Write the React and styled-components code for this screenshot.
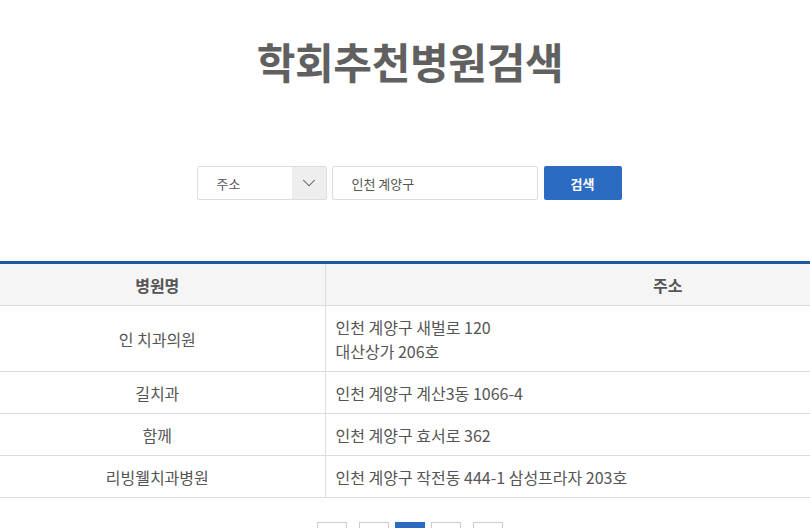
import styled, { createGlobalStyle } from "styled-components";
import { ChevronDown } from "lucide-react";

const GlobalStyle = createGlobalStyle`
  html, body {
    margin: 0;
    padding: 0;
    background: #fff;
    overflow: hidden;
  }
  body {
    font-family: "Noto Sans CJK KR", "Noto Sans", sans-serif;
    color: #555;
  }
`;

const hospitals = [
  { name: "인 치과의원", address: ["인천 계양구 새벌로 120", "대산상가 206호"] },
  { name: "길치과", address: ["인천 계양구 계산3동 1066-4"] },
  { name: "함께", address: ["인천 계양구 효서로 362"] },
  { name: "리빙웰치과병원", address: ["인천 계양구 작전동 444-1 삼성프라자 203호"] },
];

const App = () => {
  return (
    <>
      <GlobalStyle />
      <Page>
        <Title>학회추천병원검색</Title>
        <SearchBar>
          <SelectBox>
            <SelectLabel>주소</SelectLabel>
            <SelectArrow>
              <ChevronDown size={22} strokeWidth={1.1} />
            </SelectArrow>
          </SelectBox>
          <SearchInput defaultValue="인천 계양구" />
          <SearchButton>검색</SearchButton>
        </SearchBar>
        <TableWrap>
          <Table>
            <colgroup>
              <col style={{ width: "335px" }} />
              <col />
            </colgroup>
            <thead>
              <tr>
                <Th>병원명</Th>
                <Th>주소</Th>
              </tr>
            </thead>
            <tbody>
              {hospitals.map((h) => (
                <tr key={h.name}>
                  <NameCell>{h.name}</NameCell>
                  <AddressCell>
                    {h.address.map((line) => (
                      <div key={line}>{line}</div>
                    ))}
                  </AddressCell>
                </tr>
              ))}
            </tbody>
          </Table>
        </TableWrap>
        <Pagination>
          <PageButton>«</PageButton>
          <PageGroup>
            <PageButton>‹</PageButton>
            <PageButton $active>1</PageButton>
            <PageButton>›</PageButton>
          </PageGroup>
          <PageButton>»</PageButton>
        </Pagination>
      </Page>
    </>
  );
};

export default App;

const Page = styled.div`
  width: 820px;
  padding-top: 36px;
`;

const Title = styled.h1`
  margin: 0;
  text-align: center;
  font-size: 42px;
  line-height: 50px;
  font-weight: 700;
  color: #606060;
  letter-spacing: -0.3px;
`;

const SearchBar = styled.div`
  display: flex;
  justify-content: center;
  align-items: stretch;
  margin-top: 80px;
  height: 34px;
  padding-right: 2px;
`;

const SelectBox = styled.div`
  display: flex;
  width: 130px;
  box-sizing: border-box;
  border: 1px solid #ddd;
  border-radius: 2px;
  overflow: hidden;
`;

const SelectLabel = styled.div`
  flex: 1;
  display: flex;
  align-items: center;
  padding-left: 19px;
  font-size: 13px;
  color: #555;
`;

const SelectArrow = styled.div`
  width: 34px;
  display: flex;
  align-items: center;
  justify-content: center;
  background: #eee;
  color: #555;
`;

const SearchInput = styled.input`
  width: 206px;
  box-sizing: border-box;
  margin-left: 5px;
  border: 1px solid #ddd;
  border-radius: 2px;
  padding: 0 19px;
  font-family: inherit;
  font-size: 13px;
  color: #555;
  outline: none;
`;

const SearchButton = styled.button`
  width: 78px;
  margin-left: 6px;
  border: none;
  border-radius: 2px;
  background: #2c6bc2;
  color: #fff;
  font-family: inherit;
  font-size: 13px;
  font-weight: 700;
`;

const TableWrap = styled.div`
  margin-top: 61px;
  overflow: hidden;
`;

const Table = styled.table`
  width: 1020px;
  margin-left: -10px;
  border-collapse: collapse;
  border-top: 3px solid #1b5aa0;
  table-layout: fixed;
`;

const Th = styled.th`
  background: #f5f5f5;
  border-bottom: 1px solid #ddd;
  border-left: 1px solid #ddd;
  padding: 9px 10px 8px;
  font-size: 16px;
  line-height: 24px;
  font-weight: 700;
  color: #555;
  text-align: center;

  &:first-child {
    border-left: none;
  }
`;

const Cell = styled.td`
  border-bottom: 1px solid #ddd;
  padding: 9px 10px 8px;
  font-size: 16px;
  line-height: 24px;
  color: #555;
  vertical-align: middle;
`;

const NameCell = styled(Cell)`
  text-align: center;
`;

const AddressCell = styled(Cell)`
  border-left: 1px solid #ddd;
  text-align: left;
`;

const Pagination = styled.div`
  display: flex;
  justify-content: center;
  gap: 12px;
  margin-top: 24px;
`;

const PageGroup = styled.div`
  display: flex;
  gap: 6px;
`;

const PageButton = styled.div`
  width: 30px;
  height: 30px;
  box-sizing: border-box;
  display: flex;
  align-items: center;
  justify-content: center;
  border: 1px solid ${(p) => (p.$active ? "#2c6bc2" : "#ccc")};
  background: ${(p) => (p.$active ? "#2c6bc2" : "#fff")};
  color: ${(p) => (p.$active ? "#fff" : "#777")};
  font-size: 13px;
`;
